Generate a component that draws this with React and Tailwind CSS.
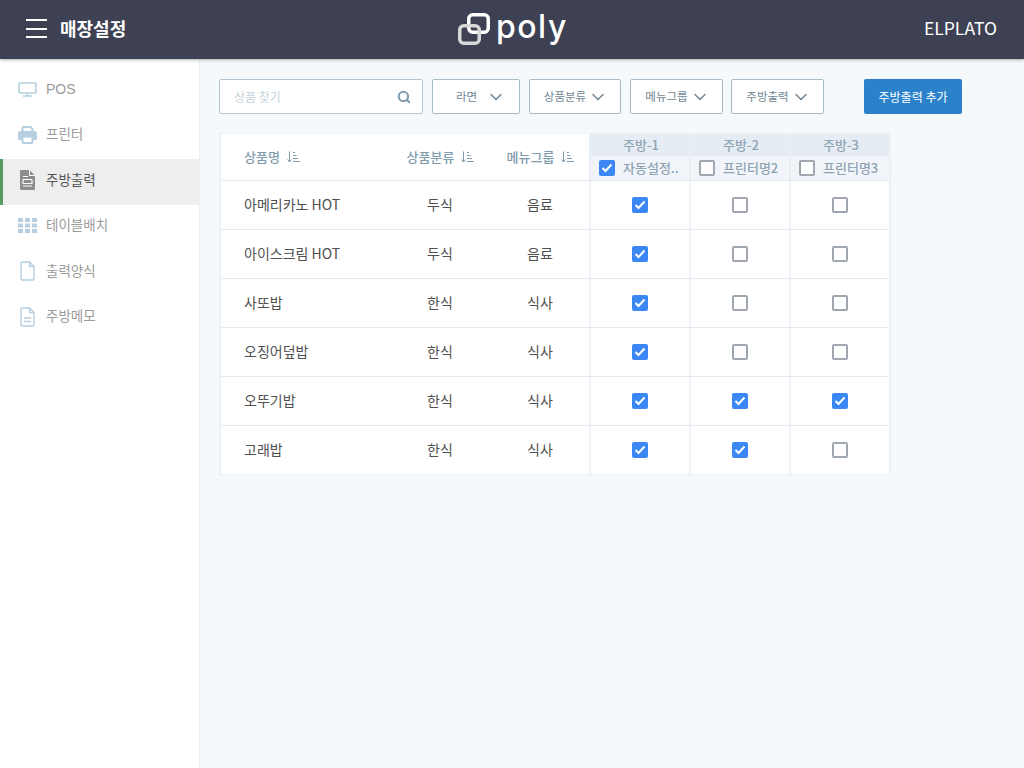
import React from "react";
import { ChevronDown, Search } from "lucide-react";

const rows = [
  { name: "아메리카노 HOT", cat: "두식", group: "음료", checks: [true, false, false] },
  { name: "아이스크림 HOT", cat: "두식", group: "음료", checks: [true, false, false] },
  { name: "사또밥", cat: "한식", group: "식사", checks: [true, false, false] },
  { name: "오징어덮밥", cat: "한식", group: "식사", checks: [true, false, false] },
  { name: "오뚜기밥", cat: "한식", group: "식사", checks: [true, true, true] },
  { name: "고래밥", cat: "한식", group: "식사", checks: [true, true, false] },
];

const kitchens = [
  { title: "주방-1", printer: "자동설정..", on: true },
  { title: "주방-2", printer: "프린터명2", on: false },
  { title: "주방-3", printer: "프린터명3", on: false },
];

const PosIcon = () => (
  <svg width="19" height="15" viewBox="0 0 19 15" fill="none" stroke="#b5cfdf" strokeWidth="1.6">
    <rect x="1" y="1" width="17" height="10" rx="1" />
    <path d="M9.500 11v2.500M5 14h9" />
  </svg>
);

const PrinterIcon = () => (
  <svg width="19" height="18" viewBox="0 0 19 18">
    <path d="M4.500 6V2a1 1 0 0 1 1-1h7l2 2v3" fill="none" stroke="#b5cfdf" strokeWidth="2" />
    <path d="M2.500 5h14A2.500 2.500 0 0 1 19 7.500V13a1 1 0 0 1-1 1H1a1 1 0 0 1-1-1V7.500A2.500 2.500 0 0 1 2.500 5z" fill="#b5cfdf" />
    <rect x="4.500" y="10.500" width="10" height="6.500" rx="1" fill="#fff" stroke="#b5cfdf" strokeWidth="2" />
  </svg>
);

const ActiveDocIcon = () => (
  <svg width="15" height="20" viewBox="0 0 15 20">
    <path d="M0 1a1 1 0 0 1 1-1h8.500L15 5.500V19a1 1 0 0 1-1 1H1a1 1 0 0 1-1-1z" fill="#8d8d8d" />
    <path d="M3 6.500h5M3 9.500h9M3 9.500v4h9v-4M3 16h9" stroke="#fff" strokeWidth="1.200" fill="none" />
    <path d="M9.500 0v5.500H15" stroke="#fff" strokeWidth="1" fill="none" />
  </svg>
);

const GridIcon = () => (
  <svg width="19" height="15" viewBox="0 0 19 15" fill="#b5cfdf">
    <rect x="0" y="0" width="5" height="4" />
    <rect x="7" y="0" width="5" height="4" />
    <rect x="14" y="0" width="5" height="4" />
    <rect x="0" y="5.500" width="5" height="4" />
    <rect x="7" y="5.500" width="5" height="4" />
    <rect x="14" y="5.500" width="5" height="4" />
    <rect x="0" y="11" width="5" height="4" />
    <rect x="7" y="11" width="5" height="4" />
    <rect x="14" y="11" width="5" height="4" />
  </svg>
);

const DocIcon = ({ lines }) => (
  <svg width="15" height="20" viewBox="0 0 15 20" fill="none" stroke="#b5cfdf" strokeWidth="1.400">
    <path d="M1 2a1 1 0 0 1 1-1h7.500L14 5.500V18a1 1 0 0 1-1 1H2a1 1 0 0 1-1-1z" />
    <path d="M9.500 1v4.500H14" />
    {lines && <path d="M4 11h7M4 14.500h7" />}
  </svg>
);

const menu = [
  { label: "POS", icon: <PosIcon />, latin: true },
  { label: "프린터", icon: <PrinterIcon /> },
  { label: "주방출력", icon: <ActiveDocIcon />, active: true },
  { label: "테이블배치", icon: <GridIcon /> },
  { label: "출력양식", icon: <DocIcon /> },
  { label: "주방메모", icon: <DocIcon lines /> },
];

const SortIcon = () => (
  <svg width="13" height="12" viewBox="0 0 13 12" fill="none" stroke="#7f9cad" strokeWidth="1">
    <path d="M2.500 0.500v10.500M0.500 8.500l2 2.500 2-2.500M6 1.500h2M6 4.500h3.500M6 7.500h5M6 10.500h7" />
  </svg>
);

const Checkbox = ({ on }) =>
  on ? (
    <span className="flex h-4 w-4 shrink-0 items-center justify-center rounded-[2px] bg-[#3b88f5]">
      <svg width="12" height="10" viewBox="0 0 12 10" fill="none" stroke="#fff" strokeWidth="2">
        <path d="M1.500 5l3 3 6-6.500" />
      </svg>
    </span>
  ) : (
    <span className="block h-4 w-4 shrink-0 rounded-[2px] border-2 border-[#a0a7b1] bg-white" />
  );

const Dropdown = ({ label, className }) => (
  <button className={`flex h-[35px] items-center justify-center rounded-[2px] border border-[#a8bcc7] bg-white text-[11.500px] text-[#6f8794] ${className}`}>
    {label}
    <ChevronDown size={20} strokeWidth={1.75} className="text-[#6f8794]" />
  </button>
);

export default function App() {
  return (
    <div className="flex h-[768px] flex-col overflow-hidden bg-[#f6f9fb] font-['Noto_Sans_CJK_KR','Noto_Sans',sans-serif]">
      <header className="relative z-10 flex h-[59px] shrink-0 items-center justify-between bg-[#3e4153] pb-[2px] pl-[26px] pr-[27px] shadow-[0_1px_3px_rgba(0,0,0,0.3)]">
        <div className="flex items-center gap-[13px]">
          <div className="flex w-[21px] flex-col gap-[6.500px]">
            <span className="h-[2px] bg-white" />
            <span className="h-[2px] bg-white" />
            <span className="h-[2px] bg-white" />
          </div>
          <h1 className="text-[18px] font-bold text-white">매장설정</h1>
        </div>
        <div className="absolute left-[458px] top-[11px] flex items-start">
          <svg width="35" height="36" viewBox="0 0 35 36" fill="none" strokeWidth="3.500">
            <rect x="10.750" y="3.750" width="19.500" height="17.500" rx="4" stroke="#fff" />
            <rect x="1.750" y="14.750" width="19.500" height="17.500" rx="4" stroke="#d8d8d8" />
          </svg>
          <span className="ml-[3px] mt-[-1px] font-['Inter',sans-serif] text-[32px] font-medium leading-[34px] tracking-[1.500px] text-white">poly</span>
        </div>
        <div className="text-[17.500px] text-white">ELPLATO</div>
      </header>
      <div className="flex min-h-0 flex-1">
        <aside className="w-[200px] shrink-0 border-r border-[#eef1f4] bg-white pt-[9.500px]">
          {menu.map((item) => (
            <div
              key={item.label}
              className={`flex h-[45.400px] items-center border-l-[3px] pb-[3px] pl-[15px] ${
                item.active ? "border-[#5a9a60] bg-[#eeeeee] text-[#555555]" : "border-transparent text-[#9b9b9b]"
              }`}
            >
              <span className="flex w-[19px] justify-center">{item.icon}</span>
              <span className={`ml-[9px] ${item.latin ? "font-['Liberation_Sans',sans-serif] text-[14px]" : "mb-[3px] text-[13.500px]"}`}>{item.label}</span>
            </div>
          ))}
        </aside>
        <main className="min-w-0 flex-1 pl-[19px] pt-[20px]">
          <div className="flex items-center">
            <div className="flex h-[35px] w-[204px] items-center justify-between rounded-[2px] border border-[#b2c6d1] bg-white pl-[14px] pr-[11px]">
              <span className="text-[12px] text-[#c3d3dc]">상품 찾기</span>
              <Search size={14} strokeWidth={3.5} className="text-[#7f9cad]" />
            </div>
            <Dropdown label="라면" className="ml-[9px] w-[88px] gap-[9px] pl-[10px]" />
            <Dropdown label="상품분류" className="ml-[9px] w-[92px] gap-[2px] pl-[2px]" />
            <Dropdown label="메뉴그룹" className="ml-[9px] w-[93px] gap-[2px] pl-[2px]" />
            <Dropdown label="주방출력" className="ml-[8px] w-[93px] gap-[2px] pl-[2px]" />
            <button className="ml-[40px] h-[35px] w-[98px] rounded-[2px] bg-[#2c82ca] text-[12px] text-white">주방출력 추가</button>
          </div>
          <div className="mt-[19px] w-[672px] border-x-2 border-b border-t border-[#edf1f6] bg-white">
            <div className="flex h-[47px] border-b border-[#e3e9ef]">
              <div className="flex w-[368px] items-center text-[13px] font-medium text-[#7f9cad]">
                <div className="flex w-[168px] items-center gap-[7px] pl-[23px]">상품명 <SortIcon /></div>
                <div className="flex w-[100px] items-center justify-center gap-[7px] pl-[3px]">상품분류 <SortIcon /></div>
                <div className="flex w-[100px] items-center justify-center gap-[7px] pl-[3px]">메뉴그룹 <SortIcon /></div>
              </div>
              {kitchens.map((k) => (
                <div key={k.title} className="flex w-[100px] flex-col border-l-2 border-[#e9eef3] text-[#8fa4b3]">
                  <div className="flex h-[22px] items-center justify-center bg-[#e6ecf3] pl-[2px] text-[13px] font-medium">{k.title}</div>
                  <div className="flex flex-1 items-center gap-[8px] bg-[#f1f5f9] pl-[8px] text-[13px] font-medium">
                    <Checkbox on={k.on} />
                    <span>{k.printer}</span>
                  </div>
                </div>
              ))}
            </div>
            {rows.map((row, i) => (
              <div
                key={row.name}
                className={`flex text-[14px] text-[#505050] ${i < rows.length - 1 ? "h-[49px] border-b border-[#e3e9ef]" : "h-[47.500px]"}`}
              >
                <div className="flex w-[168px] items-center pb-[1px] pl-[23px]">{row.name}</div>
                <div className="flex w-[100px] items-center justify-center pb-[1px] pl-[2px]">{row.cat}</div>
                <div className="flex w-[100px] items-center justify-center pb-[1px] pl-[2px]">{row.group}</div>
                {row.checks.map((on, j) => (
                  <div key={j} className="flex w-[100px] items-center justify-center border-l-2 border-[#edf1f6]">
                    <Checkbox on={on} />
                  </div>
                ))}
              </div>
            ))}
          </div>
        </main>
      </div>
    </div>
  );
}
